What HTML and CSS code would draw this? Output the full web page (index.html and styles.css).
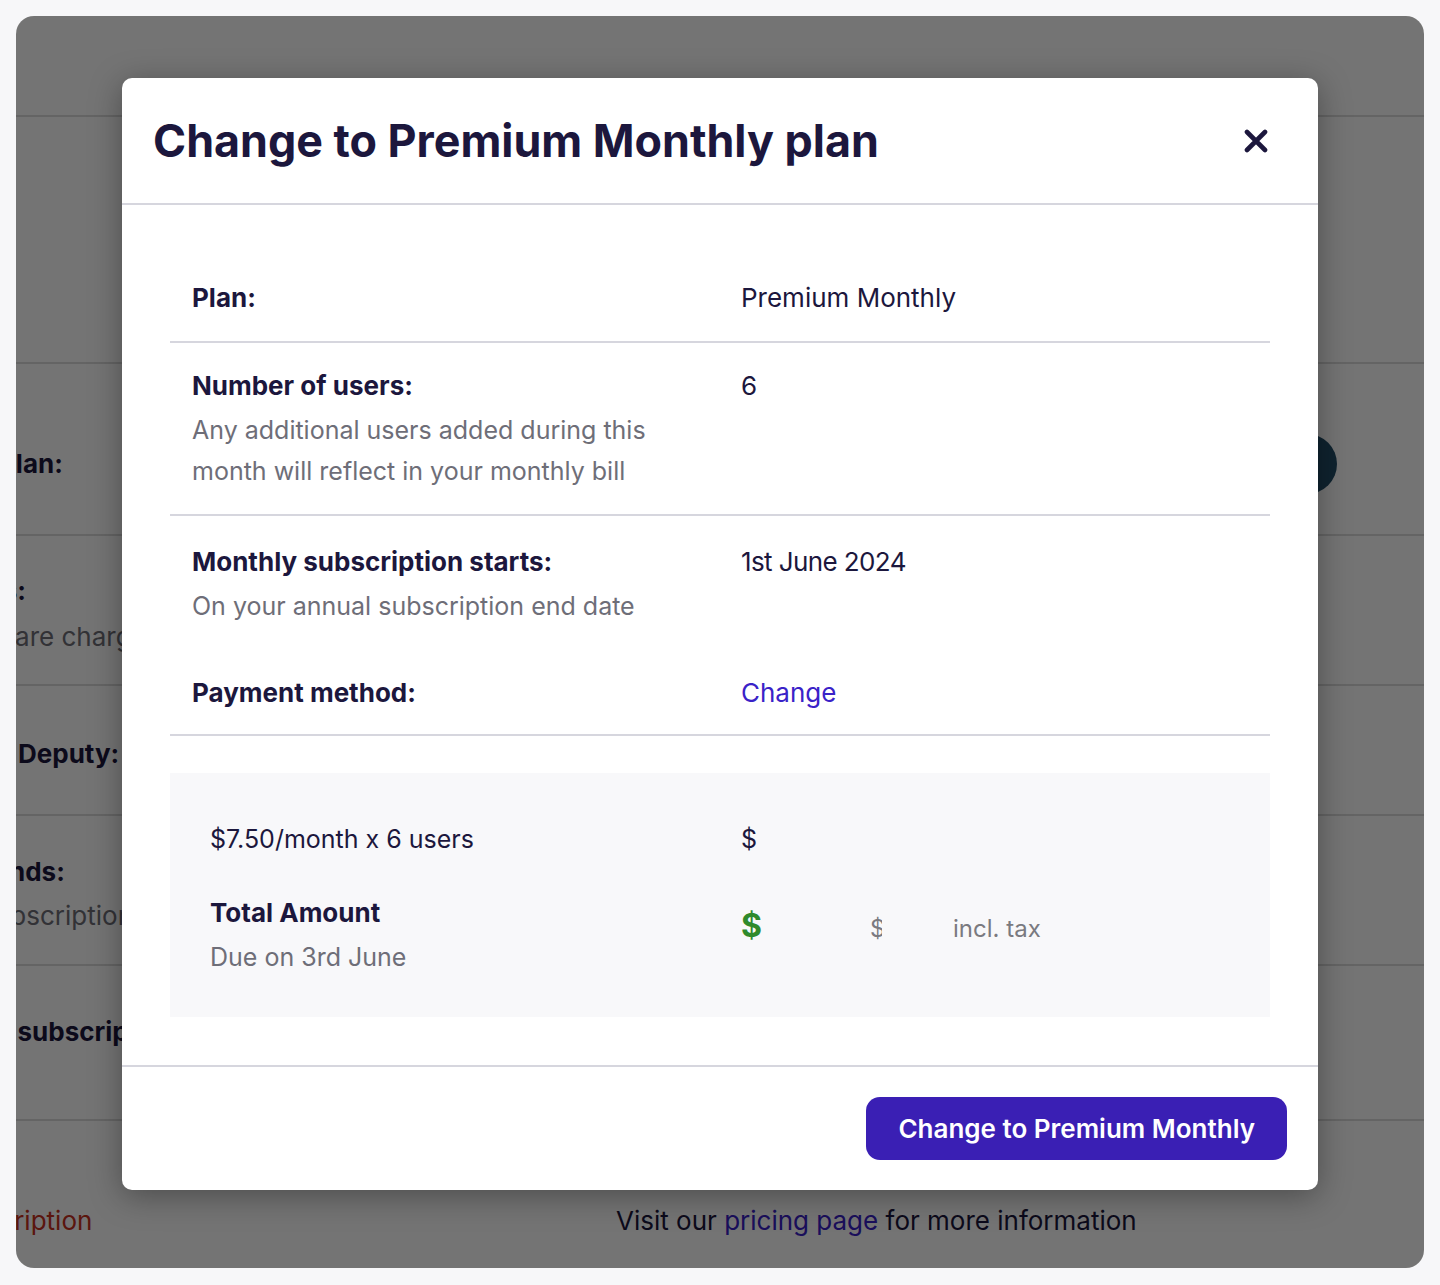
FILE: index.html
```html
<!DOCTYPE html>
<html lang="en">
  <head>
    <meta charset="UTF-8" />
    <meta name="viewport" content="width=device-width, initial-scale=1.0" />
    <title>Change plan</title>
    <link rel="stylesheet" href="styles.css">
  </head>
  <body>
    <div class="frame">
      <!-- billing page behind the dialog -->
      <div class="page">
        <div class="page-top"></div>
        <div class="page-intro"></div>
        <div class="bg-row bg-plan">
          <span class="bg-label shift-plan">Plan:</span>
          <span class="bg-pill"></span>
        </div>
        <div class="bg-row bg-users">
          <div>
            <div class="bg-label shift-users">Users:</div>
            <div class="bg-desc shift-users-desc">Users are charged monthly</div>
          </div>
        </div>
        <div class="bg-row bg-deputy">
          <span class="bg-label shift-deputy">Deputy:</span>
        </div>
        <div class="bg-row bg-ends">
          <div>
            <div class="bg-label shift-ends">Subscription ends:</div>
            <div class="bg-desc shift-ends-desc">Annual subscription</div>
          </div>
        </div>
        <div class="bg-row bg-cancel">
          <span class="bg-label shift-cancel">Cancel subscription:</span>
        </div>
        <div class="bg-foot">
          <a class="bg-danger">Cancel subscription</a>
          <p class="bg-visit">Visit our <a>pricing page</a> for more information</p>
        </div>
      </div>

      <div class="overlay"></div>

      <div class="modal">
        <div class="modal-head">
          <h1>Change to Premium Monthly plan</h1>
          <button class="close" aria-label="Close">
            <svg width="24" height="24" viewBox="0 0 24 24">
              <path d="M3 3 L21 21 M21 3 L3 21" stroke="#1c173d" stroke-width="4.6" stroke-linecap="round" fill="none" />
            </svg>
          </button>
        </div>

        <div class="modal-body">
          <div class="row">
            <div class="label">Plan:</div>
            <div class="value">Premium Monthly</div>
          </div>
          <div class="row">
            <div>
              <div class="label">Number of users:</div>
              <div class="desc">Any additional users added during this month will reflect in your monthly bill</div>
            </div>
            <div class="value">6</div>
          </div>
          <div class="row starts">
            <div>
              <div class="label">Monthly subscription starts:</div>
              <div class="desc">On your annual subscription end date</div>
            </div>
            <div class="value date">1st June 2024</div>
          </div>
          <div class="row payment">
            <div class="label">Payment method:</div>
            <div class="value"><a class="link">Change</a></div>
          </div>

          <div class="summary">
            <div class="sum-row">
              <div>$7.50/month x 6 users</div>
              <div>$</div>
            </div>
            <div class="sum-row total">
              <div>
                <div class="label">Total Amount</div>
                <div class="desc">Due on 3rd June</div>
              </div>
              <div class="amount">
                <span class="price">$</span>
                <span class="old-price">$</span>
                <span class="tax">incl. tax</span>
              </div>
            </div>
          </div>
        </div>

        <div class="modal-foot">
          <button class="primary">Change to Premium Monthly</button>
        </div>
      </div>
    </div>
  </body>
</html>
```

FILE: styles.css
```css
body {
  margin: 0;
  background: #f7f7f9;
  font-family: "Inter", "Liberation Sans", sans-serif;
  color: #1c173d;
}
.frame {
  position: relative;
  margin: 16px;
  height: 1252px;
  border-radius: 18px;
  overflow: hidden;
}

/* page behind the overlay */
.page {
  background: #fff;
  height: 100%;
  font-size: 26px;
  line-height: 42px;
}
.page-top {
  height: 99px;
  border-bottom: 2px solid #dcdcdc;
}
.page-intro {
  height: 245px;
  border-bottom: 2px solid #dcdcdc;
}
.bg-row {
  display: flex;
  border-bottom: 2px solid #dcdcdc;
  overflow: hidden;
}
.bg-label {
  font-weight: 700;
  white-space: nowrap;
}
.bg-desc {
  color: #6e6e78;
  white-space: nowrap;
}
.bg-plan {
  height: 141px;
  padding-top: 29px;
  align-items: center;
}
.shift-plan {
  margin-left: -17px;
}
.bg-pill {
  margin-left: auto;
  margin-right: 87px;
  width: 240px;
  height: 60px;
  border-radius: 30px;
  background: #214d69;
}
.bg-users {
  height: 114px;
  padding-top: 34px;
}
.shift-users {
  margin-left: -73px;
}
.shift-users-desc {
  margin-top: 4px;
  margin-left: -80px;
}
.bg-deputy {
  height: 120px;
  padding-top: 8px;
  align-items: center;
}
.shift-deputy {
  margin-left: 2px;
}
.bg-ends {
  height: 113px;
  padding-top: 35px;
}
.shift-ends {
  margin-left: -191px;
}
.shift-ends-desc {
  margin-top: 2px;
  margin-left: -127px;
}
.bg-cancel {
  height: 108px;
  padding-top: 45px;
}
.shift-cancel {
  margin-left: -93px;
}
.bg-foot {
  display: flex;
  padding-top: 79px;
}
.bg-danger {
  color: #c8321f;
  margin-left: -168px;
  width: 768px;
  flex-shrink: 0;
}
.bg-visit {
  margin: 0;
}
.bg-visit a {
  color: #3a22c8;
}
.overlay {
  position: absolute;
  inset: 0;
  background: rgba(0, 0, 0, 0.545);
}

/* dialog */
.modal {
  position: absolute;
  left: 106px;
  top: 62px;
  width: 1196px;
  background: #fff;
  border-radius: 10px;
  box-shadow: 0 6px 32px rgba(0, 0, 0, 0.35);
}
.modal-head {
  display: flex;
  justify-content: space-between;
  align-items: center;
  padding: 36px 31px 35px;
  border-bottom: 2px solid #d6d6de;
}
.modal-head h1 {
  margin: 0;
  font-size: 44.8px;
  line-height: 54px;
  font-weight: 700;
}
.close {
  border: none;
  background: none;
  padding: 0;
  margin-right: 19px;
  display: flex;
}
.modal-body {
  padding: 50px 48px 48px;
  font-size: 26px;
  line-height: 42px;
}
.row {
  display: grid;
  grid-template-columns: 528px 1fr;
  column-gap: 21px;
  padding: 22px;
  border-bottom: 2px solid #d6d6de;
}
.row.starts {
  padding-top: 25px;
  padding-bottom: 23px;
  border-bottom: none;
}
.row.payment {
  padding-bottom: 20px;
}
.label {
  font-size: 26px;
  font-weight: 700;
}
.row .label + .desc,
.sum-row .label + .desc {
  margin-top: 3px;
}
.desc {
  color: #6e6e78;
  font-size: 25px;
  line-height: 41px;
}
.date {
  letter-spacing: -0.6px;
}
.link {
  color: #3a22c8;
}
.summary {
  margin-top: 37px;
  background: #f8f8fa;
  padding: 45px 40px 39px;
  font-size: 25px;
}
.sum-row {
  display: grid;
  grid-template-columns: 531px 1fr;
}
.sum-row.total {
  margin-top: 32px;
  align-items: center;
}
.amount {
  display: flex;
  align-items: baseline;
  margin-bottom: 16px;
}
.price {
  color: #2f8a2c;
  font-weight: 700;
  font-size: 32px;
  width: 20px;
}
.old-price {
  color: #7a7a80;
  font-size: 24px;
  margin-left: 109px;
  width: 12px;
  overflow: hidden;
}
.tax {
  color: #7a7a80;
  font-size: 24px;
  margin-left: 71px;
}
.modal-foot {
  display: flex;
  justify-content: flex-end;
  padding: 30px 31px 30px;
  border-top: 2px solid #d6d6de;
}
.primary {
  height: 63px;
  padding: 0 32px;
  border: none;
  border-radius: 14px;
  background: #3a1fb4;
  color: #fff;
  font-family: inherit;
  font-size: 26px;
  font-weight: 600;
}
```
